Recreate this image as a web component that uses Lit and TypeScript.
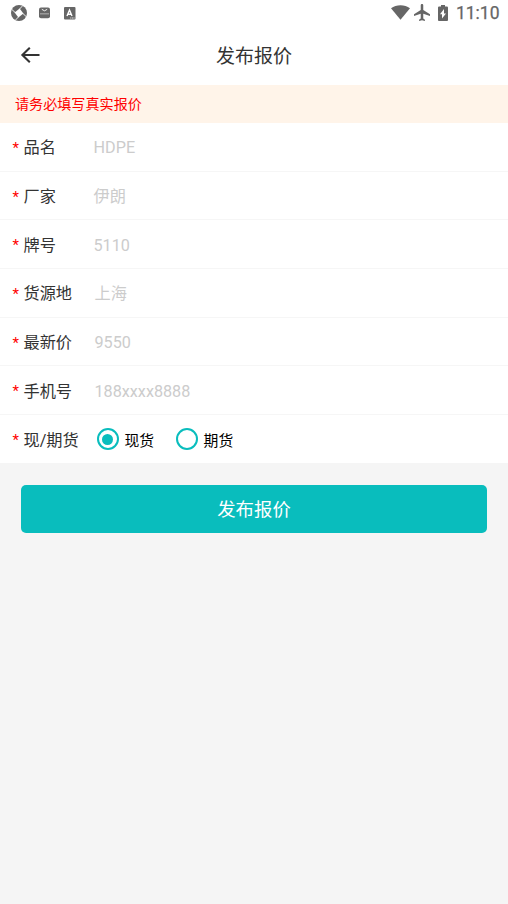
import { LitElement, html, css, svg } from "lit";
import { customElement, state } from "lit/decorators.js";

interface Field {
  label: string;
  placeholder: string;
  wide?: boolean;
}

const FIELDS: Field[] = [
  { label: "品名", placeholder: "HDPE" },
  { label: "厂家", placeholder: "伊朗" },
  { label: "牌号", placeholder: "5110" },
  { label: "货源地", placeholder: "上海", wide: true },
  { label: "最新价", placeholder: "9550", wide: true },
  { label: "手机号", placeholder: "188xxxx8888", wide: true },
];

@customElement("status-bar")
class StatusBar extends LitElement {
  static styles = css`
    :host {
      display: flex;
      align-items: center;
      justify-content: space-between;
      height: 26px;
      box-sizing: border-box;
      padding: 0 8.500px 0 11px;
      color: #666;
    }
    .group { display: flex; align-items: center; }
    svg { display: block; fill: currentColor; }
    .bag { margin-left: 12px; }
    .letter { margin-left: 14px; }
    .wifi { margin-bottom: 1px; }
    .plane { margin: 0 0 1px 4px; }
    .battery { margin: 0 0 1px 8px; }
    .time {
      margin-left: 8px;
      font: 400 17.500px/26px Roboto, sans-serif;
      -webkit-text-stroke: 0.250px #666;
      letter-spacing: 0;
    }
  `;
  render() {
    return html`
      <div class="group">
        <svg width="16" height="16" viewBox="0 0 16 16">
          <circle cx="8" cy="8" r="8"/>
          <path d="M8.600 3.600L12.400 8.600 7.400 12.400 3.600 7.400Z" fill="#fff"/>
          ${[0, 90, 180, 270].map(
            (a) => svg`<path transform="rotate(${a} 8 8)" d="M8.600 4L11.800 .6" fill="none" stroke="#fff" stroke-width="0.900"/>`
          )}
        </svg>
        <svg class="bag" width="11" height="12" viewBox="0 0 11 12">
          <rect x="0" y="0.500" width="11" height="10.800" rx="2"/>
          <path d="M2.800 2.300Q5.500 5.300 8.200 2.300" fill="none" stroke="#fff" stroke-width="0.900"/>
          <path d="M1 6.800H10" stroke="#fff" stroke-width="1.300" stroke-opacity=".4"/>
        </svg>
        <svg class="letter" width="12" height="13" viewBox="0 0 12 13">
          <rect x="0" y="0" width="11.500" height="12.500" rx="1"/>
          <path d="M3 9L5.500 3 8 9M4 7.200H7" fill="none" stroke="#fff" stroke-width="1.400"/>
          <path d="M6.300 11H10.500" stroke="#fff" stroke-width="0.900" stroke-dasharray="1 .6"/>
        </svg>
      </div>
      <div class="group">
        <svg class="wifi" width="19" height="15" viewBox="0 0 19 15">
          <path d="M0 3.300C5.300-.7 13.700-.7 19 3.300L9.500 14.800Z"/>
        </svg>
        <svg class="plane" width="16" height="17" viewBox="2 2 19 20" preserveAspectRatio="none">
          <path d="M21 16v-2l-8-5V3.500c0-.83-.67-1.500-1.500-1.500S10 2.670 10 3.500V9l-8 5v2l8-2.500V19l-2 1.500V22l3.500-1 3.500 1v-1.500L13 19v-5.500l8 2.500z"/>
        </svg>
        <svg class="battery" width="10" height="16" viewBox="7 2 10 20" preserveAspectRatio="none">
          <path d="M15.670 4H14V2h-4v2H8.330C7.600 4 7 4.600 7 5.330v15.330C7 21.400 7.600 22 8.330 22h7.330c.74 0 1.340-.6 1.340-1.330V5.330C17 4.600 16.400 4 15.670 4zM11 19v-5.500H9L13 7v5.500h2L11 19z"/>
        </svg>
        <span class="time">11:10</span>
      </div>
    `;
  }
}

@customElement("app-root")
class AppRoot extends LitElement {
  @state() private kind = "现货";

  static styles = css`
    :host {
      display: flex;
      flex-direction: column;
      min-height: 904px;
      background: #f5f5f5;
      color: #333;
      font-family: Roboto, "Noto Sans CJK SC", sans-serif;
    }
    .top { background: #fff; }
    .header {
      display: grid;
      grid-template-columns: 60px 1fr 60px;
      align-items: center;
      height: 59px;
    }
    .back { display: block; margin: 0 0 1px 20px; }
    .title { text-align: center; font-size: 19px; line-height: 28px; padding-top: 2px; }
    .notice {
      height: 38px;
      padding-left: 15px;
      background: #fff4e9;
      color: #f00;
      font-size: 14.100px;
      line-height: 38px;
    }
    .form { background: #fff; }
    .row {
      display: flex;
      align-items: center;
      height: 48.700px;
      box-sizing: border-box;
      border-bottom: 1px solid #f6f6f6;
      font-size: 16.200px;
      padding-left: 12.500px;
    }
    .row:last-child { border-bottom: 0; height: 47.800px; }
    .star { width: 11px; color: #f00; font-size: 15px; padding-top: 2px; }
    .label { width: 70px; white-space: nowrap; padding-bottom: 1px; }
    .label.wide { width: 71px; }
    .label.choice { width: 73px; }
    .hint { color: #ccc; padding-bottom: 1px; }
    .hint.latin { padding: 2px 0 0; }
    .option {
      display: flex;
      align-items: center;
      margin-right: 21.500px;
      color: #000;
      font-size: 14.800px;
    }
    .ring {
      display: grid;
      place-items: center;
      width: 22px;
      height: 22px;
      box-sizing: border-box;
      margin-right: 6px;
      border: 2px solid #09bdbd;
      border-radius: 50%;
    }
    .dot { width: 11px; height: 11px; border-radius: 50%; background: #09bdbd; }
    .submit {
      display: block;
      height: 48px;
      margin: 21.700px 21px 0;
      padding: 0 0 2px;
      border: 0;
      border-radius: 5px;
      background: #09bdbd;
      color: #fff;
      font-family: inherit;
      font-size: 18.400px;
    }
  `;

  render() {
    return html`
      <div class="top">
        <status-bar></status-bar>
        <div class="header">
          <svg class="back" width="20" height="18" viewBox="0 0 20 18" fill="none" stroke="#333" stroke-width="2.100">
            <path d="M9.800 1.800L2.400 9L9.800 16.200M2 9H19.500"/>
          </svg>
          <div class="title">发布报价</div>
        </div>
      </div>
      <div class="notice">请务必填写真实报价</div>
      <div class="form">
        ${FIELDS.map(
          (f) => html`<div class="row">
            <span class="star">*</span>
            <span class="label ${f.wide ? "wide" : ""}">${f.label}</span>
            <span class="hint ${/^\w+$/.test(f.placeholder) ? "latin" : ""}">${f.placeholder}</span>
          </div>`
        )}
        <div class="row">
          <span class="star">*</span>
          <span class="label choice">现/期货</span>
          ${["现货", "期货"].map(
            (k) => html`<div class="option" @click=${() => (this.kind = k)}>
              <span class="ring">${this.kind === k ? html`<span class="dot"></span>` : null}</span>
              <span>${k}</span>
            </div>`
          )}
        </div>
      </div>
      <button class="submit">发布报价</button>
    `;
  }
}
